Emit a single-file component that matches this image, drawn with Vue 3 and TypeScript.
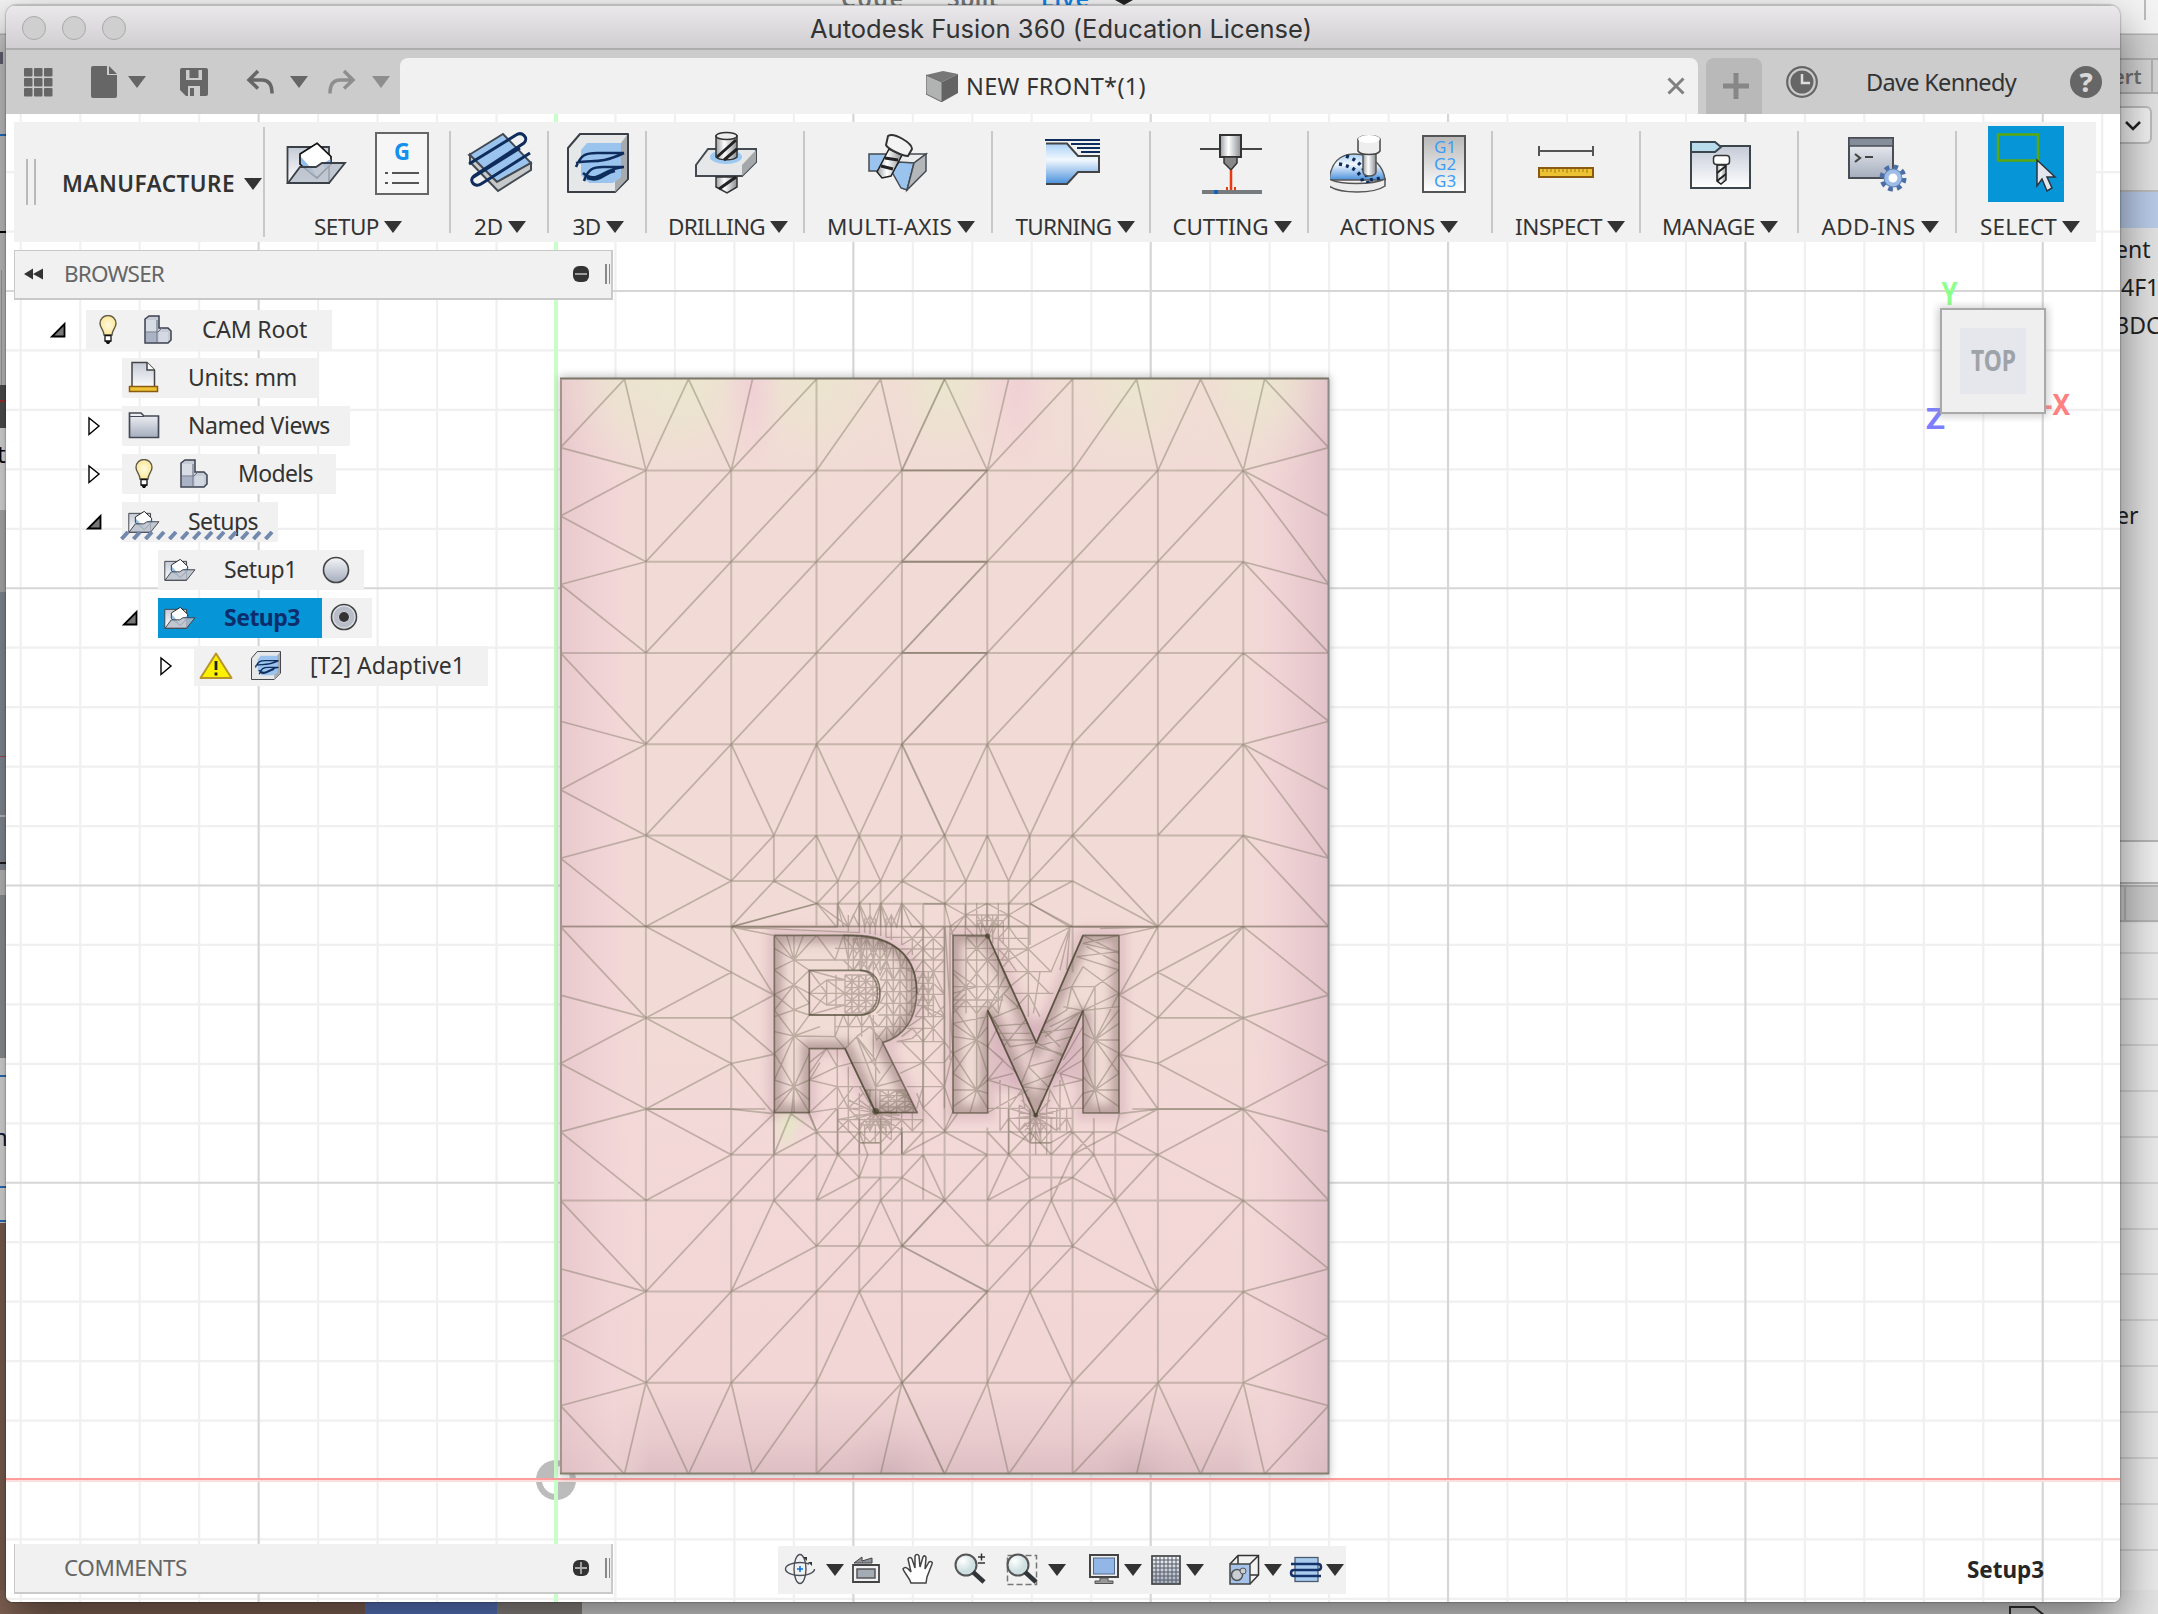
<script setup lang="ts">
type Pt = [number, number]
type Seg = [number, number, number, number]

interface Group { id: string; label: string; w: number; text: number; box: string; iw: number; shift: number }
interface Row { icon: string; text: string; x: number; slot: number; chip: number; tw: number; arrow: '' | 'open' | 'shut'; kind?: string }

/* Spreads the letters of a label so that it takes exactly the given width. */
const vFit = {
  mounted(el: HTMLElement, b: { value: number }) {
    const n = (el.textContent || '').trim().length
    const w = el.getBoundingClientRect().width
    el.style.letterSpacing = `${(b.value - w) / n}px`
  },
}

const groups: Group[] = [
  { id: 'setup', label: 'SETUP', w: 186, text: 65, box: '285 126 144 76', iw: 144, shift: 1 },
  { id: 'two', label: '2D', w: 98, text: 29, box: '465 126 68 76', iw: 68, shift: 1 },
  { id: 'three', label: '3D', w: 98, text: 28, box: '563 126 68 76', iw: 68, shift: 1 },
  { id: 'drill', label: 'DRILLING', w: 158, text: 97, box: '690 126 70 76', iw: 70, shift: 3 },
  { id: 'multi', label: 'MULTI-AXIS', w: 188, text: 125, box: '864 126 68 76', iw: 68, shift: 3 },
  { id: 'turn', label: 'TURNING', w: 158, text: 96, box: '1036 126 70 76', iw: 70, shift: 4 },
  { id: 'cut', label: 'CUTTING', w: 158, text: 96, box: '1194 126 70 76', iw: 70, shift: 3 },
  { id: 'act', label: 'ACTIONS', w: 184, text: 95, box: '1330 126 140 76', iw: 140, shift: -1 },
  { id: 'insp', label: 'INSPECT', w: 148, text: 87, box: '1532 126 68 76', iw: 68, shift: 4 },
  { id: 'man', label: 'MANAGE', w: 158, text: 93, box: '1684 126 70 76', iw: 70, shift: 1 },
  { id: 'add', label: 'ADD-INS', w: 158, text: 94, box: '1843 126 70 76', iw: 70, shift: 3 },
  { id: 'sel', label: 'SELECT', w: 140, text: 77, box: '1988 126 76 76', iw: 76, shift: 4 },
]

const rows: Row[] = [
  { icon: 'root', text: 'CAM Root', x: 86, slot: 116, chip: 246, tw: 105, arrow: 'open' },
  { icon: 'units', text: 'Units: mm', x: 122, slot: 66, chip: 196, tw: 109, arrow: '' },
  { icon: 'folder', text: 'Named Views', x: 122, slot: 66, chip: 228, tw: 142, arrow: 'shut' },
  { icon: 'root', text: 'Models', x: 122, slot: 116, chip: 214, tw: 75, arrow: 'shut' },
  { icon: 'setup', text: 'Setups', x: 122, slot: 66, chip: 156, tw: 70, arrow: 'open', kind: 'hatched' },
  { icon: 'setup', text: 'Setup1', x: 158, slot: 66, chip: 206, tw: 73, arrow: '', kind: 'radio' },
  { icon: 'setup', text: 'Setup3', x: 158, slot: 66, chip: 164, tw: 76, arrow: 'open', kind: 'active' },
  { icon: 'adaptive', text: '[T2] Adaptive1', x: 194, slot: 116, chip: 294, tw: 155, arrow: 'shut' },
]

/* Construction grid */
const vMinor: number[] = []
const vMajor: number[] = []
const hMinor: number[] = []
const hMajor: number[] = []
for (let i = -9; i <= 26; i++) (i % 5 === 0 ? vMajor : vMinor).push(556 + i * 59.47)
for (let i = -22; i <= 2; i++) (i % 5 === 0 ? hMajor : hMinor).push(1480 + i * 59.45)

/* Mesh in cell units: 9 columns by 12 rows */
const CX = 85.35
const CY = 91.24
const X = (u: number) => +(560.5 + u * CX).toFixed(1)
const Y = (v: number) => +(379.2 + v * CY).toFixed(1)
const chain = (s: string): Seg[] => {
  const out: Seg[] = []
  for (const line of s.trim().split(/\s*;\s*/)) {
    const p = line.trim().split(/\s+/).map((q) => q.split(',').map(Number) as Pt)
    for (let i = 1; i < p.length; i++) out.push([p[i - 1][0], p[i - 1][1], p[i][0], p[i][1]])
  }
  return out
}
const toPath = (segs: Seg[]) => segs.map((s) => `M${X(s[0])} ${Y(s[1])}L${X(s[2])} ${Y(s[3])}`).join('')

const edges = chain(`
0,.75 .75,0 1,1 1.5,0 2,1 2.25,0; 2,1 3,0; 3,1 3.75,0 4,1; 4.5,0 5,1 5.25,0; 5,1 6,0; 6,1 6.75,0 7,1 7.5,0 8,1 8.25,0 9,.75;
0,.75 1,1 0,1.5 1,2 0,2.25 1,3; 0,3 1,4 0,3.75; 1,4 0,4.5 1,5 0,5.25 1,6; 0,6 1,7 0,6.75; 1,7 0,7.5 1,8 0,8.25 1,9; 0,9 1,10 0,9.75; 1,10 0,10.5 1,11 0,11.25 .75,12;
9,.75 8,1 9,1.5; 8,1 9,2.25 8,2 9,3; 8,3 9,3.75 8,4 9,4.5; 8,4 9,5.25 8,5 9,6; 8,6 9,6.75 8,7 9,7.5 8,8 9,8.25; 8,8 9,9; 8,9 9,9.75 8,10 9,10.5 8,11 9,11.25 8.25,12;
.75,12 1,11 1.5,12 2,11 2.25,12 3,11; 3,12 4,11 3.75,12; 4.5,12 5,11 5.25,12 6,11; 6,12 7,11 6.75,12; 7,11 7.5,12 8,11 8.25,12;
1,5 2,4 2.5,5 3,4 3.5,5 4,4; 4.5,5 5,4 5.5,5 6,4; 6,5 7,4; 7,5 8,4;
1,5 2,5.5 1,6; 2,5.5 2.5,5; 3,5 2.5,5.5 2,6; 2.5,5.5 3,5.75 2,6; 3,5 3.25,5.5 3.5,5 3.75,5.5 4,5; 3,5.75 3.25,5.5; 3.25,5.75 3.5,5.5; 3.5,5.75 3.75,5.5; 3.75,5.75 4,5.5 4.5,5 4.75,5.5 5,5 5.25,5.5 5.5,5; 5.5,5.5 6,5; 4,5.5 4.5,5.75 4.75,5.5; 4.5,5.75 4.25,5.75; 5.25,5.75 5.5,5.5; 5.5,5.75 6,5.5 7,6 6,5; 7,6 8,5; 7,7 8,6; 5.5,5.75 6,6;
2,6 2.5,6.75 2,6.5 1,6; 1,7 2,6.5; 2,7 2.5,6.75; 2,7 2.5,7.4 2,7.5 2.5,8.05 2,8; 1,7 2,7.5; 1,8 2,7.5; 1,8 2,8.5 1,9; 1,7 2,7; 1,8 2,8;
8,6 7,6.5 8,7 7,7; 8,7 7,7.5 8,8; 7,7 8,7; 7,6.5 6.55,6.75 7,7 6.55,7.4 7,7.5; 6.55,7.4 7,8 6.55,8.05; 6.55,6.75 7,6; 7,8 8,8;
2,8.5 2.5,8.05 2.5,8.5 2.7,8.05 3,8.25 2.5,8.5; 3,8.25 2.9,8.03; 3,8.5 2.5,9; 3,9 3.25,8.5 3.5,8.75 3,9; 3.5,8.75 3.6,8.5; 3.75,8.75 3.5,9; 4,8.75 3.75,9; 4,8.75 4.5,9 4.25,8.5 4,8.75; 4.5,9 5,8.5; 5,9 5.25,8.5 5.5,8.75 5,9; 6,8.75 5.5,9; 6,8.75 6.5,9 6.25,8.5 6,8.75; 5.75,9 6,8.5; 6.5,9 7,8.5 6.5,8.25 6.55,8.05; 8,8 7,8.5 8,9; 6.5,8.25 7,8;
3,8.25 3.25,8.5 3.5,8.25 3.6,8.5; 3.75,8.5 4,8.25 4,8.5 4.25,8.25; 4.5,8.25 5,8.5; 4.5,8.25 4,8.5; 5,8.25 5.25,8.5 5.5,8.25 5.75,8.5 6,8.25 6.25,8.5; 6.25,8.25 6,8.5; 6.5,8.25 6,8.5; 4.5,8.25 4.65,8.05;
1,10 2,9; 2,9 2.5,8.5; 2.5,9 2,10 3,9.5 2.5,9; 3,9.5 3.5,9; 3.5,9.5 3.75,9 4,9.5; 4.5,9 5,9.5 5.5,9; 5.5,9.5 5.75,9 6,9.5 6.5,9 7,10 6,9.5; 7,10 8,9; 3,10 3.5,9.5; 3.5,10 4,9.5; 5,10 5.5,9.5; 5.5,10 6,9.5;
1,11 2,10; 2,11 3,10; 3,11 3.5,10 4,11; 5,11 5.5,10 6,11; 6,11 7,10; 7,11 8,10`)
for (const v of [1, 2, 3]) for (let k = 1; k <= 7; k++) if (k !== 4) edges.push([k, v + 1, k + 1, v])

const grid = chain(`
1,1 1,11; 2,1 2,11; 3,0 3,6; 3,8.25 3,12; 4,1 4,6; 4,8.2 4,11; 5,1 5,6; 5,8.2 5,11; 6,0 6,6.5; 6,8 6,12; 7,1 7,11; 8,1 8,11;
2.5,5 2.5,5.5; 3.25,5.5 3.25,6; 3.5,5 3.5,6; 3.75,5.5 3.75,6; 4.5,5 4.5,9; 4.75,5.5 4.75,6; 5.25,5.5 5.25,6; 5.5,5 5.5,6.2; 4.25,5.75 4.25,9;
2.5,8 2.5,9; 3.25,8 3.25,8.5; 3.5,8.1 3.5,10; 3.75,8.1 3.75,9; 5.25,8 5.25,8.5; 5.5,8 5.5,10; 5.75,8.1 5.75,9; 6.25,8.1 6.25,8.5; 6.5,8.25 6.5,9;
1,1 8,1; 1,2 8,2; 0,3 9,3; 1,4 8,4; 1,5 8,5; 2,5.5 6,5.5; 3,5.75 5.5,5.75; 0,6 9,6; 3,8.25 4,8.25; 4,8.25 6.5,8.25; 3.5,8.37 3.75,8.37; 5.5,8.37 5.75,8.37; 2,8.5 7,8.5; 3.5,8.75 4,8.75; 5.5,8.75 6,8.75; 0,9 9,9; 3,9.5 6,9.5; 1,10 8,10; 1,11 8,11; 1,8 2.4,8; 6.7,8 8,8`)

const spine = chain(`4.5,0 4,1 5,1 4,2 5,2 4,3 5,3 4,4 4.5,5; 4.5,9 4,9.5 5,10 4,11 4.5,12`)

/* Fine mesh round the engraved letters, in thirds of a pixel from (720, 860) */
const lattice = (x0: number, y0: number, x1: number, y1: number, dx: number, dy: number) => {
  let d = ''
  for (let x = x0; x <= x1 + 0.1; x += dx) d += `M${x} ${y0}V${y1}`
  for (let y = y0; y <= y1 + 0.1; y += dy) d += `M${x0} ${y}H${x1}`
  let j = 0
  for (let y = y0; y < y1 - 1; y += dy, j++) {
    let i = 0
    for (let x = x0; x < x1 - 1; x += dx, i++) {
      d += (i + (i >> 1) + j * 2) % 3 === 0 ? `M${x} ${y}l${dx} ${dy}` : `M${x + dx} ${y}l${-dx} ${dy}`
    }
  }
  return d
}
const fan = (cx: number, cy: number, pts: string) => pts.trim().split(/\s+/).map((p) => `M${cx} ${cy}L${p.replace(',', ' ')}`).join('')

const outside =
  'M352 130L385 200L418 130L434 200L450 165L466 200L482 130L498 200L514 165L530 200L545 130L575 200L609 200L545 130M352 130L370 200M385 200L400 165L418 200M418 130L450 200M482 130L450 200M482 130L514 200M545 130L514 200' +
  'M352 130V200M385 165V215M418 130V218M450 130V222M482 130V228M514 165V240M545 130V255M434 175V218M466 175V225M498 175V232' +
  'M498 232H673M530 267H673M560 300H673M580 335H673M592 370H640M592 403H673M590 437H640M585 470H673M560 505H640M530 545H673' +
  'M609 200V545M640 235V545M577 235V285M673 200V545M545 200L577 235L609 200L640 235L673 200M545 255L577 235L609 267L640 235L673 267M560 285L609 235M577 300L609 267L640 300L673 267M585 335L609 300L640 335L673 300M592 370L609 335L625 370L640 335L673 403L640 370M592 403L609 370L625 403L640 370M592 437L609 403L625 437L640 403L673 470L609 437M585 470L609 437L640 470L673 437M565 500L609 470L640 505L673 470M545 530L577 505L609 545L640 505L673 545M530 545L577 535L609 505' +
  'M625 335V470M592 352H640M592 387H640M592 420H640' +
  'M736 130V225M770 130V225M801 130V226M835 130V300M866 130V300M736 165H866M770 182H850M785 200H850M736 165L801 130L866 165L925 130M690 226L736 165L770 200L801 165L835 200L866 165L925 200M736 165L690 200M770 165L801 215L835 165M785 182L801 226L818 182M770 182L785 226M835 182L815 230M835 165L810 220M736 200L760 226M673 130L699 226M673 130L736 165' +
  'M815 235H925M825 267H925M835 300H870M850 335H925M850 182V250M818 165V250M785 165V215M835 235L866 200L890 235L925 267L866 267L835 235M835 267L866 300L925 267M845 300L866 267M850 320L866 300L890 335' +
  'M385 745V812M418 700V883M450 690V812M482 758V883M514 758V840M545 758V883M352 779H545M400 765H540M418 795H514M436 785H500M352 745H430M352 812L385 779L418 812L434 779L450 812L467 779L482 812L498 779L514 812L545 779L577 812L609 779M352 779L385 812M385 745L418 779M577 758V812M545 779H609M418 812L450 847L482 812L514 840M385 812L418 848H482L514 812M434 795V848M466 795V848M498 779V830' +
  fan(467, 758, '385,720 385,745 400,779 418,795 434,812 450,812 482,812 498,812 514,795 545,779 545,812 418,720 418,680 440,690 352,779') +
  'M866 735V883M898 735V812M930 760V848M947 768V883M962 770V848M980 745V883M1010 745V812M1040 745V812M866 745H915M985 745H1050M866 775H1055M900 760H1000M915 790H980M840 812L866 775L898 812L915 790L930 812L947 790L962 812L980 790L1010 812L1040 775L1055 812M866 812L930 848H993L1055 812M898 812L930 848L947 812L962 848L993 812' +
  fan(947, 768, '866,745 880,775 898,812 915,812 930,835 962,835 980,812 1010,812 1020,775 1040,745 925,710 905,720 965,720 990,720 898,735') +
  'M35 201L290 130M35 201L160 226M35 201L350 201L290 130M35 201L420 218M290 130L385 200' +
  'M1312 201L1199 226M1312 201L1050 201L930 130M1312 201L1140 206M1050 201L993 335L925 267M1050 201L925 267L925 335M1050 201L1020 330M1050 201L1040 330' +
  'M925 200V470M925 335H993M870 380L925 335L990 402M865 267L925 335M880 400H1000M925 402L960 470M925 402L890 440M960 335L940 460' +
  'M545 545L609 608L673 545M609 545V745M520 608H673M540 640L609 608M560 680H673M609 608L673 680L609 745L590 700M673 545V745M609 680L590 745M673 608L699 570M673 680L699 580M673 545L699 580L675 200M673 680L699 755L673 812L609 745M690 200L690 600' +
  'M268 608L320 566L352 620L400 608M352 566V883M268 660L352 620L352 680L268 660M268 758L352 680L385 745L430 700M290 812L268 758L352 745L400 680M290 812L352 745M320 566L268 640M352 680H430M385 620V745'

const inside =
  'M345 300L370 226L385 300L410 230L425 300L440 230L460 300L480 235L500 300L520 250L545 320L560 280M330 300H560M345 265H540M385 226V330M425 226V331M460 230V345M500 240V360M540 260V540M370 300L400 331L425 300L445 335L460 300L480 345L500 300L520 360L545 320L585 340M480 325H590M482 360H592M482 395H592M482 430H588M475 465H580M450 500H560M345 500H450' +
  'M480 360L500 325L520 360L540 325L560 360L590 360M480 395L500 360L520 395L540 360L565 395L590 380M480 430L500 395L520 430L540 395L565 430L590 400M470 460L500 430L520 465L540 430L565 465L585 430M445 465L475 500L500 465L520 500L540 465L560 500M345 530L370 465L385 500L410 465L425 500L450 465L470 540L500 500L520 530L540 500M520 260V530M500 300V540M560 280V500M385 465V560M425 465V530M460 465V600M575 320V460M410 530L450 500L490 548M345 465V530' +
  lattice(400, 235, 500, 330, 20, 32) +
  fan(222, 300, '163,226 200,226 250,226 163,265 163,330 268,331 345,300 290,226') +
  fan(222, 375, '163,330 163,403 163,450 268,331 268,400 268,430') +
  fan(222, 450, '163,403 163,470 268,430 268,465') +
  fan(222, 528, '163,450 163,515 163,580 268,465 345,530 268,566 300,500 163,660') +
  fan(222, 680, '163,580 163,660 163,720 163,758 215,758 268,758 268,720 268,660 268,580') +
  'M222 226V758M163 403L222 450M200 226L222 300L250 226L290 226L345 300L370 226L410 280' +
  'M345 530L375 566L410 530L440 610L467 600L490 548M410 530L467 600L467 758M440 610L467 680L520 608M430 690L545 690M467 680L545 660M467 758L545 690L592 758M400 608H520M410 530L480 640' +
  lattice(480, 690, 580, 758, 25, 17) +
  lattice(738, 230, 835, 300, 32, 35) + 'M699 300H835M770 300V400M803 300V452M738 300L770 340L803 300L835 340L803 380L770 340L738 380L699 340M699 380H870M738 300V460M699 420L738 380L770 420L803 380L835 420L870 380M699 460L738 420L770 460L803 420L835 460L850 400M699 420H850M835 300V450M699 440H800' +
  fan(770, 540, '699,440 699,490 699,530 699,580 699,640 803,452 803,500 803,560 803,640') +
  fan(770, 690, '699,580 699,640 699,690 699,740 803,640 803,700 803,745 750,758 803,660') +
  'M770 230V690M699 440L738 400M699 330L770 380L699 400M699 490L803 470' +
  fan(1125, 540, '1089,452 1089,520 1089,600 1197,400 1197,450 1197,490 1197,540 1197,580 1197,640') +
  fan(1125, 690, '1089,600 1089,650 1089,700 1089,745 1197,580 1197,640 1197,690 1197,740 1140,758') +
  fan(1089, 452, '1125,380 1197,440 1055,380 1197,400 1030,440 990,500 975,530') +
  'M1125 380V690M1197 330L1125 380L1055 380L1089 320L1197 400M1197 330L1070 290L1197 275L1089 250L1197 226M1089 226L1197 280M1100 260L1197 310' +
  'M1000 400L1055 380L1040 450L975 490M1089 500L949 520M1089 520L949 560L1089 600M949 548L1030 590L1089 620M949 548L925 620L985 680M949 548L870 560L803 452M803 500L925 490M803 520L930 520M803 540L940 540M850 560L925 470L850 400M880 600L949 560M803 452L870 380L835 300M803 480L900 440M1000 600L925 620L900 680L1010 640M1020 560L960 500M870 320L803 452M905 680L985 690'

const bowl = lattice(375, 345, 480, 460, 21, 19) + 'M395 355V450M416 345V455M437 345V455M320 360V435M320 360H375M320 435H375M348 345V450M268 331L375 360M268 400H480M268 331L320 400L268 465M268 465L375 435M268 400L320 360M268 400L320 435M320 360L375 400L320 435M375 400L320 400'
const moat = 'M268 660L300 608M803 452L835 500L803 560L850 600L803 660L880 640M803 660L905 690M803 560L890 640M803 758L870 720L925 690M1089 600L1020 640L1089 660L1000 680M1089 500L1030 600M1089 560L1010 640M803 745L866 745L905 690L915 745M1089 745L1020 745L990 690L980 745M1020 640L1055 745L1089 700M840 660L840 812M866 680V812M1020 660V812'

const rPath = 'M163 226H400C530 226 592 300 590 400C588 480 550 530 488 548L592 758H467L375 566H268V758H163Z'
const rHole = 'M268 331H420C470 331 480 370 480 400C480 440 460 465 420 465H268Z'
const mPath = 'M699 226H803L949 548L1089 226H1197V759H1089V452L947 768L803 452V759H699Z'

const paths = { edges: toPath(edges), grid: toPath(grid), spine: toPath(spine) }
const yellow: [number, number, number][] = [[0.9, 85, 0.9], [1.5, 75, 0.9], [3, 85, 0.8], [4.5, 62, 0.9], [6.75, 78, 0.85], [8.2, 75, 0.95]]
const sideRows = [953, 999, 1045, 1091, 1137, 1183, 1229, 1274, 1320, 1366, 1412, 1458, 1504, 1550, 1596]
const nine = [0, 1, 2, 3, 4, 5, 6, 7, 8]
</script>

<template>
  <div class="desktop">
    <svg class="back" width="2158" height="1614" viewBox="0 0 2158 1614">
      <rect width="2158" height="1614" fill="#e2e2e2" />
      <rect width="2158" height="34" fill="#f4f4f4" />
      <g class="bt" font-size="23">
        <text x="841" y="7" textLength="62" fill="#777">Code</text>
        <text x="947" y="7" textLength="51" fill="#777">Split</text>
        <text x="1041" y="7" textLength="48" fill="#0d84e8">Live</text>
      </g>
      <path d="M1115 0h18l-9 5z" fill="#222" />
      <path d="M2145 0v20" stroke="#bbb" stroke-width="2" />
      <path d="M0 34.500H2158" stroke="#b5b5b5" stroke-width="2" />
      <rect x="0" y="35" width="2158" height="58" fill="#d3d3d3" />
      <path d="M2100 59H2158M2100 93H2158M2152 59V93" stroke="#b0b0b0" stroke-width="2" fill="none" />
      <text class="bt" x="2113" y="84" font-size="20" fill="#707070">ert</text>
      <rect x="2080" y="107" width="71" height="36" rx="5" fill="#f0f0f0" stroke="#bbb" stroke-width="2" />
      <path d="M2126 122l7 7 7-7" stroke="#222" stroke-width="2.500" fill="none" />
      <path d="M2100 191H2158" stroke="#bbb" stroke-width="2" />
      <rect x="2100" y="192" width="58" height="36" fill="#b9cbe8" />
      <g class="rt" font-size="23" fill="#222">
        <text x="2115" y="258">ent</text><text x="2121" y="296">4F1</text><text x="2116" y="334">3DC</text><text x="2116" y="524">er</text>
      </g>
      <rect x="2100" y="841" width="58" height="42" fill="#efefef" />
      <rect x="2100" y="886" width="58" height="35" fill="#cfcfcf" />
      <path d="M2100 841H2158M2100 883H2158M2100 886H2158M2125 887V921M2100 921H2158" stroke="#b4b4b4" stroke-width="2" fill="none" />
      <rect x="2100" y="923" width="58" height="691" fill="#eaeaea" />
      <path v-for="y in sideRows" :key="y" :d="`M2100 ${y}H2158`" stroke="#d2d2d2" stroke-width="2" />
      <rect x="582" y="1590" width="1576" height="24" fill="#e4e4e4" />
      <path d="M2010 1620V1607H2034L2050 1620" fill="none" stroke="#333" stroke-width="2" />
      <g>
        <rect x="0" y="35" width="10" height="350" fill="#cfcfcf" />
        <rect x="0" y="134" width="10" height="2" fill="#2271cf" />
        <rect x="0" y="231" width="10" height="2" fill="#000" />
        <rect x="0" y="52" width="3" height="12" fill="#667" />
        <rect x="1" y="270" width="1" height="150" fill="#5cc" />
        <rect x="0" y="385" width="10" height="43" fill="#555" />
        <rect x="0" y="400" width="10" height="2" fill="#a33" />
        <rect x="0" y="428" width="10" height="82" fill="#f0f0f0" />
        <text class="rt" x="-3" y="463" font-size="24">t</text>
        <rect x="0" y="510" width="10" height="82" fill="#bbb" />
        <rect x="0" y="592" width="10" height="278" fill="#9097a0" />
        <rect x="0" y="756" width="10" height="1" fill="#a55" />
        <rect x="0" y="815" width="10" height="2" fill="#ccc" />
        <rect x="0" y="862" width="10" height="2" fill="#222" />
        <rect x="0" y="870" width="10" height="25" fill="#ccc" />
        <rect x="0" y="895" width="10" height="163" fill="#9a9da0" />
        <rect x="0" y="1058" width="10" height="164" fill="#eee" />
        <text class="rt" x="-7" y="1146" font-size="24" fill="#124">n</text>
        <path d="M0 1076H10M0 1187H10M0 1221H10" stroke="#2b78c8" stroke-width="2" />
        <rect x="0" y="1223" width="10" height="391" fill="#856556" />
      </g>
      <rect x="0" y="1590" width="365" height="24" fill="#8a6a5a" />
      <rect x="365" y="1590" width="132" height="24" fill="#5f7fcf" />
      <rect x="497" y="1590" width="85" height="24" fill="#96908c" />
    </svg>

    <svg class="defs" width="0" height="0">
      <defs>
        <linearGradient id="steel" x1="0" y1="0" x2="1" y2="0"><stop offset="0" stop-color="#9a9ea2" /><stop offset=".4" stop-color="#fff" /><stop offset="1" stop-color="#8a8e92" /></linearGradient>
        <linearGradient id="grey" x1="0" y1="0" x2="0" y2="1"><stop offset="0" stop-color="#f4f5f8" /><stop offset="1" stop-color="#a5adbd" /></linearGradient>
        <linearGradient id="greyUp" x1="0" y1="0" x2="0" y2="1"><stop offset="0" stop-color="#c4cad6" /><stop offset="1" stop-color="#fff" /></linearGradient>
        <linearGradient id="blue" x1="0" y1="0" x2="0" y2="1"><stop offset="0" stop-color="#a9d0f7" /><stop offset=".4" stop-color="#f2f8fe" /><stop offset="1" stop-color="#4a90dc" /></linearGradient>
        <linearGradient id="gcode" x1="0" y1="0" x2="0" y2="1"><stop offset="0" stop-color="#b8b8b8" /><stop offset="1" stop-color="#fff" /></linearGradient>
        <radialGradient id="bulbG"><stop offset="0" stop-color="#fffbe0" /><stop offset="1" stop-color="#fbe79a" /></radialGradient>
        <radialGradient id="lens" cx=".35" cy=".3"><stop offset="0" stop-color="#fff" /><stop offset="1" stop-color="#cfe0e2" /></radialGradient>
        <symbol id="i-setup" viewBox="0 0 61 43">
          <path d="M1.500 5H43V41H1.500z" fill="url(#greyUp)" stroke="#3b3f46" stroke-width="1.800" />
          <path d="M31 1.200L45 14.500V22L31 36 14 22V12z" fill="#fff" stroke="#111" stroke-width="1.700" />
          <path d="M15 15L26 27 31 35 24 30 15 22zM44.500 17V22L40 26 36 22z" fill="#8fbdec" />
          <path d="M2 41L14 25H30L36 21H59L43 41z" fill="#b4bdc9" fill-opacity=".82" stroke="#3b3f46" stroke-width="1.800" />
        </symbol>
        <symbol id="i-cubes" viewBox="0 0 28 29">
          <path d="M1 4L5 1H15V13H24L27 16V25L24 28H1z" fill="#c6cbd6" stroke="#3b4250" stroke-width="1.500" />
          <path d="M2 5h10v12H2z" fill="#d8dce5" /><path d="M2 18h11v9H2z" fill="#aab3c6" /><path d="M15 17h9v10h-9z" fill="#d3d8e2" /><path d="M13 5V27M2 17h12l4-4" stroke="#6a7384" fill="none" />
        </symbol>
        <symbol id="i-bulb" viewBox="0 0 18 30">
          <path d="M5 20C5 15 1 13 1 8.500A8 8 0 0 1 17 8.500C17 13 13 15 13 20z" fill="url(#bulbG)" stroke="#5f5a48" stroke-width="1.400" />
          <path d="M6 20.500h6v5.500H6z" fill="#fff" stroke="#111" stroke-width="1.300" /><path d="M6 26h6l-2 3H8z" fill="#111" />
        </symbol>
        <symbol id="i-adapt" viewBox="0 0 62 60">
          <path d="M1 15L13 1H61V46L48 59H1z" fill="#e6e7e9" stroke="#3b4048" stroke-width="2" stroke-linejoin="round" />
          <path d="M48 59V48L54 44V10L60 2V46z" fill="#a8abae" /><path d="M14 17L20 10H54V44L46 50H22L14 42z" fill="#9ac4ee" />
          <path d="M9 34C14 22 18 20 30 20H57M9 30C24 26 32 32 57 20M17 48C21 36 26 34 36 34H57M16 40C30 52 34 36 57 34M20 45C34 50 36 40 48 38" fill="none" stroke="#0f2d5c" stroke-width="2.600" />
        </symbol>
      </defs>
    </svg>

    <section class="window">
      <header class="titlebar">
        <i class="light" /><i class="light" /><i class="light" />
        <h1><span v-fit="502">Autodesk Fusion 360 (Education License)</span></h1>
      </header>

      <div class="tabbar">
        <svg class="quick" width="394" height="64" viewBox="6 50 394 64" fill="#666">
          <rect v-for="n in nine" :key="n" :x="24 + (n % 3) * 10" :y="68 + Math.floor(n / 3) * 10" width="8.500" height="8.500" rx="1" />
          <path d="M93 66h14v9h10v21a2 2 0 0 1-2 2H93a2 2 0 0 1-2-2V68a2 2 0 0 1 2-2z M109 66l8 8h-8z" />
          <path d="M128 76h18l-9 12zM290 76h18l-9 12z" />
          <path fill-rule="evenodd" d="M182 68h24a2 2 0 0 1 2 2v24a2 2 0 0 1-2 2H186l-6-6V70a2 2 0 0 1 2-2zM186 70v10h16V70zM188 96h12V86H188z" />
          <rect x="189.500" y="68" width="9" height="10" /><rect x="190" y="88" width="4" height="8" />
          <path d="M258 71L249 80l9 8.500M250 80H262C269 80 272 85 272 93.500" fill="none" stroke="#666" stroke-width="3.500" />
          <path d="M344 71L353 80l-9 8.500M352 80H340C333 80 330 85 330 93.500" fill="none" stroke="#8e8e8e" stroke-width="3.500" />
          <path d="M372 76h18l-9 12z" fill="#8e8e8e" />
        </svg>
        <div class="tab">
          <div class="tabname">
            <svg width="32" height="31" viewBox="0 0 32 31"><path d="M0 4L17 0 32 3 16 11z" fill="#777" /><path d="M0 4L16 11V31L0 23z" fill="#b0b3b2" stroke="#666" /><path d="M16 11L32 3V22L16 31z" fill="#636363" /></svg>
            <span v-fit="180">NEW FRONT*(1)</span>
          </div>
          <svg class="close" width="18" height="18" viewBox="0 0 18 18"><path d="M1.500 1.500l15 15M16.500 1.500l-15 15" stroke="#808080" stroke-width="3" /></svg>
        </div>
        <div class="plus"><svg width="26" height="26" viewBox="0 0 26 26"><path d="M13 0V26M0 13H26" stroke="#878787" stroke-width="5" /></svg></div>
        <svg class="clock" width="32" height="32" viewBox="0 0 32 32"><circle cx="16" cy="16" r="14.800" fill="none" stroke="#666" stroke-width="2.200" /><circle cx="16" cy="16" r="11.500" fill="#666" /><path d="M16 8v9h8" fill="none" stroke="#ddd" stroke-width="2.500" /></svg>
        <span v-fit="150" class="user">Dave Kennedy</span>
        <span class="help">?</span>
      </div>

      <main class="viewport">
        <svg class="canvas" width="2114" height="1488" viewBox="6 114 2114 1488">
          <defs>
            <linearGradient id="base" x1="0" y1="0" x2="0" y2="1"><stop offset="0" stop-color="#f1ddd4" /><stop offset=".1" stop-color="#f2dad6" /><stop offset=".6" stop-color="#f2dad6" /><stop offset=".72" stop-color="#f3d8d8" /><stop offset=".92" stop-color="#f1d6d5" /><stop offset=".97" stop-color="#e8cacd" /><stop offset="1" stop-color="#ddbfc4" /></linearGradient>
            <linearGradient id="sideL" x1="0" y1="0" x2="1" y2="0"><stop offset="0" stop-color="#e8c9cd" /><stop offset=".6" stop-color="#f2d5d7" stop-opacity=".8" /><stop offset="1" stop-color="#f1dad5" stop-opacity="0" /></linearGradient>
            <linearGradient id="sideR" x1="1" y1="0" x2="0" y2="0"><stop offset="0" stop-color="#e1c2c9" /><stop offset=".6" stop-color="#f1d3d6" stop-opacity=".8" /><stop offset="1" stop-color="#f1dad5" stop-opacity="0" /></linearGradient>
            <radialGradient id="yel"><stop offset="0" stop-color="#eae7cd" /><stop offset=".4" stop-color="#ebe5cf" stop-opacity=".7" /><stop offset="1" stop-color="#f0dcd4" stop-opacity="0" /></radialGradient>
            <radialGradient id="pink"><stop offset="0" stop-color="#f0ced5" stop-opacity=".9" /><stop offset="1" stop-color="#f1d5d6" stop-opacity="0" /></radialGradient>
            <radialGradient id="mauve"><stop offset="0" stop-color="#c8a9b0" stop-opacity=".7" /><stop offset="1" stop-color="#e0c0c6" stop-opacity="0" /></radialGradient>
            <clipPath id="face"><rect x="560" y="379" width="769" height="1095" /></clipPath>
            <clipPath id="glyphs"><path :d="rPath + rHole + mPath" clip-rule="evenodd" /></clipPath>
            <clipPath id="hole"><path :d="rHole" /></clipPath>
            <filter id="soft" x="-20%" y="-20%" width="140%" height="140%"><feGaussianBlur stdDeviation="14" /></filter>
            <filter id="cast" x="-5%" y="-5%" width="110%" height="110%"><feGaussianBlur stdDeviation="4" /></filter>
          </defs>
          <rect x="6" y="114" width="2114" height="1488" fill="#fff" />
          <path :d="vMinor.map((x) => `M${x} 114V1602`).join('') + hMinor.map((y) => `M6 ${y}H2120`).join('')" stroke="#f0f0f0" stroke-width="2.200" />
          <path :d="vMajor.map((x) => `M${x} 114V1602`).join('') + hMajor.map((y) => `M6 ${y}H2120`).join('')" stroke="#d6d6d6" stroke-width="2.200" />

          <circle cx="556" cy="1480" r="20" fill="#bcbcbc" />
          <path d="M556 1480V1466A14 14 0 0 1 570 1480zM556 1480V1494A14 14 0 0 1 542 1480z" fill="#fff" />
          <path d="M6 1481H2120" stroke="#fddede" stroke-width="2" />
          <path d="M556 114V1602" stroke="#c8ffc8" stroke-width="4" />
          <path d="M6 1479H2120" stroke="#ff9c9c" stroke-width="2" />

          <rect x="560" y="376" width="770" height="1101" fill="#777" opacity=".45" filter="url(#cast)" />
          <rect x="560" y="379" width="769" height="1095" fill="url(#base)" />
          <g clip-path="url(#face)">
            <rect x="560" y="379" width="90" height="1095" fill="url(#sideL)" />
            <rect x="1235" y="379" width="94" height="1095" fill="url(#sideR)" />
            <ellipse v-for="t in yellow" :key="t[0]" :cx="X(t[0])" cy="379" :rx="t[1]" ry="110" :opacity="t[2]" fill="url(#yel)" />
            <ellipse :cx="X(2.25)" cy="390" rx="30" ry="95" fill="url(#pink)" /><ellipse :cx="X(5.35)" cy="390" rx="42" ry="100" fill="url(#pink)" />
            <ellipse :cx="X(3.85)" cy="1480" rx="60" ry="65" fill="url(#mauve)" /><ellipse :cx="X(6.75)" cy="1480" rx="55" ry="65" fill="url(#mauve)" /><ellipse cx="565" cy="1474" rx="95" ry="75" fill="url(#mauve)" opacity=".4" /><ellipse cx="1325" cy="1474" rx="80" ry="75" fill="url(#mauve)" opacity=".4" />
          </g>

          <g transform="translate(720 860) scale(.33333)">
            <g filter="url(#soft)">
              <path :d="rPath + mPath" fill="none" stroke="#c9a3ae" stroke-opacity=".42" stroke-width="44" />
              <path d="M820 460L920 480H980L1080 470V660H1020L985 690 949 600 905 690H820z" fill="#cfa9b6" fill-opacity=".55" />
              <path d="M175 765h70l-50 110z" fill="#e6e6c8" />
            </g>
            <g clip-path="url(#glyphs)">
              <path :d="rPath + rHole + mPath" fill="#eddcd3" fill-opacity=".5" fill-rule="evenodd" />
              <path :d="rPath + mPath" fill="none" stroke="#8d7370" stroke-opacity=".5" stroke-width="44" filter="url(#soft)" />
              <path :d="inside" class="fine" />
            </g>
            <g clip-path="url(#hole)"><path :d="bowl" class="fine" /></g>
            <path :d="outside + moat" class="fine" />
          </g>
          <path :d="paths.grid" fill="none" stroke="#5f5a43" stroke-opacity=".28" stroke-width="2" />
          <path :d="paths.edges" fill="none" stroke="#5f5a43" stroke-opacity=".34" stroke-width="1.700" />
          <path :d="paths.spine" fill="none" stroke="#4f4a35" stroke-opacity=".42" stroke-width="1.900" />
          <path :d="`M560 ${Y(6)}H1329`" stroke="#4f4a35" stroke-opacity=".3" stroke-width="1.500" />
          <g transform="translate(720 860) scale(.33333)" fill="none" stroke="#45412c" stroke-linejoin="round">
            <path :d="rPath + rHole + mPath" stroke-width="5" stroke-opacity=".62" />
            <path d="M467 758L375 566M803 226L949 548L1089 226M803 452L947 768L1089 452M370 226C530 226 592 290 590 400M420 331C490 331 490 465 420 465H268M467 758H530" stroke-width="5" stroke-opacity=".5" />
            <g fill="#45412c" fill-opacity=".7" stroke="none"><circle cx="467" cy="754" r="10" /><circle cx="803" cy="228" r="8" /><circle cx="947" cy="766" r="7" /></g>
          </g>
          <path d="M560 378.500H1329" stroke="#7b7768" stroke-width="2" /><path d="M561 379V1474" stroke="#a3948c" stroke-width="2" /><path d="M1328.500 379V1474" stroke="#8f8a8a" stroke-width="2" /><path d="M560 1473.500H1329" stroke="#86806f" stroke-width="2" />

          <g class="cube">
            <text x="1941.500" y="305" font-size="33" textLength="16" lengthAdjust="spacingAndGlyphs" fill="#8dff8d">Y</text>
            <text x="1926" y="429" font-size="28" textLength="19" lengthAdjust="spacingAndGlyphs" fill="#7d7dff">Z</text>
            <text x="2044" y="415" font-size="28" textLength="26" lengthAdjust="spacingAndGlyphs" fill="#ff8080">-X</text>
            <rect x="1938" y="307" width="110" height="109" fill="#999" opacity=".5" filter="url(#cast)" />
            <rect x="1941" y="309" width="104" height="104" fill="#efefef" stroke="#a9a9a9" stroke-width="2" />
            <rect x="1960" y="328" width="66" height="66" fill="#e5e7ec" />
            <text x="1971" y="371" font-size="29" textLength="45" lengthAdjust="spacingAndGlyphs" fill="#9ea2a9" font-weight="700">TOP</text>
          </g>
        </svg>

        <div class="ribbon">
          <div class="workspace"><i class="grip" /><b v-fit="173">MANUFACTURE</b><i class="tri" /></div>
          <template v-for="(g, n) in groups" :key="g.id">
            <i class="sep" :class="{ tall: n === 0 }" />
            <div class="group" :style="{ width: g.w - 2 + 'px' }">
              <svg :width="g.iw" height="76" :viewBox="g.box">
                <template v-if="g.id === 'setup'">
                  <use href="#i-setup" x="286" y="142" width="61" height="43" />
                  <rect x="376" y="133" width="52" height="61" fill="#f6f6f6" stroke="#666" stroke-width="2" />
                  <text class="rt" x="394" y="160" font-size="24" font-weight="700" fill="#1290ee" textLength="16" lengthAdjust="spacingAndGlyphs">G</text>
                  <path d="M385 173h3m4 0h27M385 183h3m4 0h27" stroke="#555" stroke-width="2" />
                </template>
                <template v-else-if="g.id === 'two'">
                  <path d="M469 155L503 134 531 163 497 182z" fill="#9ac4ee" stroke="#444a52" stroke-width="2" /><path d="M497 182L531 163V170L498 191 470 162V155z" fill="#c6c8ca" stroke="#444a52" stroke-width="2" />
                  <path d="M469 164L516 135C522 131 529 138 524 143L474 176C468 181 475 188 481 184L530 153M472 178L520 148" fill="none" stroke="#0f2d5c" stroke-width="3" />
                </template>
                <use v-else-if="g.id === 'three'" href="#i-adapt" x="567" y="133" width="62" height="60" />
                <template v-else-if="g.id === 'drill'">
                  <path d="M696 165L708 149H756V162L742 176H696z" fill="#e6e7e9" stroke="#444a52" stroke-width="2" /><path d="M742 176V165L756 150V162z" fill="#a5a8ab" />
                  <ellipse cx="726" cy="157" rx="16" ry="7" fill="#9cc8f2" />
                  <path d="M716 177H737V187L727 193 716 187z" fill="url(#steel)" stroke="#333" stroke-width="1.500" /><path d="M719 189L736 177" stroke="#222" stroke-width="3" />
                  <path d="M716 136V157A11 4 0 0 0 737 157V136z" fill="url(#steel)" stroke="#333" stroke-width="1.500" /><path d="M717 157L736 140M724 160L737 149" stroke="#222" stroke-width="3" />
                  <ellipse cx="726.500" cy="136" rx="10.500" ry="3.500" fill="#eee" stroke="#333" stroke-width="1.500" />
                </template>
                <template v-else-if="g.id === 'multi'">
                  <path d="M869 154H890V171H869z" fill="#9ac4ee" stroke="#444a52" stroke-width="1.500" /><path d="M890 168L903 154H926L914 163 898 168z" fill="#ececec" stroke="#444a52" stroke-width="1.500" /><path d="M892 172L899 162 914 163 907 190 901 188z" fill="#9ac4ee" stroke="#444a52" stroke-width="1.500" /><path d="M914 163L926 154V171L907 190z" fill="#b4b7ba" stroke="#444a52" stroke-width="1.500" />
                  <path d="M889 149L902 155 891 176 882 178 877 172z" fill="url(#steel)" stroke="#222" stroke-width="1.500" /><path d="M885 158L898 160M881 166L893 169" stroke="#222" stroke-width="3" />
                  <path d="M888 136C894 132 912 143 912 149L908 156C902 156 888 149 886 145z" fill="#f3f3f3" stroke="#333" stroke-width="2" />
                </template>
                <template v-else-if="g.id === 'turn'">
                  <path d="M1046 143.500H1067L1078 156H1099V172H1078L1067 184H1046z" fill="url(#blue)" /><path d="M1046 143.500H1067L1078 156H1099V172H1078L1067 184H1046" fill="none" stroke="#444" stroke-width="2" />
                  <path d="M1045 140H1100M1071 144H1100M1077 148H1100M1081 152H1100" stroke="#0f2d5c" stroke-width="2.200" />
                </template>
                <template v-else-if="g.id === 'cut'">
                  <path d="M1200 149H1262" stroke="#444" stroke-width="2" /><rect x="1220" y="135" width="21" height="22" fill="url(#steel)" stroke="#333" stroke-width="2" /><path d="M1224 157H1237V163L1231 170 1224 163z" fill="#888" stroke="#333" stroke-width="1.500" />
                  <path d="M1231 170V190" stroke="#e63a12" stroke-width="2.500" /><path d="M1227 187v3M1235 187v3" stroke="#e63a12" stroke-width="2" /><rect x="1202" y="190" width="60" height="4" fill="#777b7e" /><rect x="1214" y="190" width="4" height="4" fill="#1263bb" />
                </template>
                <template v-else-if="g.id === 'act'">
                  <path d="M1329 180C1331 163 1340 154 1354 154C1374 154 1384 168 1385 180z" fill="url(#blue)" stroke="#555" stroke-width="1.500" /><path d="M1329 179C1340 185 1372 185 1385 179V186C1374 194 1340 194 1329 186z" fill="#ececec" stroke="#555" stroke-width="1.500" />
                  <path d="M1346 156C1358 160 1366 168 1368 183M1339 164C1352 166 1361 172 1363 183M1370 180L1382 178" fill="none" stroke="#0f2d5c" stroke-width="3.500" stroke-dasharray="3 4" />
                  <path d="M1363 152H1376V172A6.500 4 0 0 1 1363 172z" fill="url(#steel)" stroke="#555" stroke-width="1.500" /><path d="M1358 139A11.500 4.500 0 0 1 1380 139V151A11.500 5 0 0 1 1358 151z" fill="#eee" stroke="#444" stroke-width="1.500" /><ellipse cx="1369" cy="139" rx="11" ry="4" fill="#fff" />
                  <rect x="1423" y="136" width="42" height="56" fill="url(#gcode)" stroke="#555" stroke-width="2" />
                  <text class="rt" font-size="17" fill="#3d9df5"><tspan x="1434" y="153">G1</tspan><tspan x="1434" y="170">G2</tspan><tspan x="1434" y="187">G3</tspan></text>
                </template>
                <template v-else-if="g.id === 'insp'">
                  <path d="M1539 146V156M1593 146V156M1539 151H1593" stroke="#555" stroke-width="2" /><rect x="1539" y="168" width="54" height="9" fill="#edc233" stroke="#8a5a10" stroke-width="2" /><path d="M1543 169v3m4-3v3m4-3v3m4-3v4m4-4v3m4-3v3m4-3v4m4-4v3m4-3v3m4-3v3m4-3v3m4-3v4" stroke="#a37410" />
                </template>
                <template v-else-if="g.id === 'man'">
                  <path d="M1691 146H1750V188H1691z" fill="url(#greyUp)" stroke="#3b464c" stroke-width="2" /><path d="M1691 142H1715L1721 147 1715 152H1691z" fill="#b9dcec" stroke="#3b464c" stroke-width="2" />
                  <path d="M1717 165H1726V180L1721 184 1717 181z" fill="url(#steel)" stroke="#222" stroke-width="1.500" /><path d="M1717 173L1726 166M1717 181L1726 174" stroke="#222" stroke-width="2" /><rect x="1713.500" y="155.500" width="16" height="9" rx="3" fill="#fff" stroke="#333" stroke-width="1.500" />
                </template>
                <template v-else-if="g.id === 'add'">
                  <rect x="1850" y="138" width="44" height="40" fill="url(#grey)" stroke="#4a4d55" stroke-width="2" /><rect x="1850" y="138" width="44" height="8" fill="#868d9a" stroke="#4a4d55" stroke-width="1.500" /><path d="M1856 154l5 4-5 4M1866 157h8" fill="none" stroke="#444" stroke-width="2.200" />
                  <circle cx="1894" cy="178" r="10.500" fill="none" stroke="#4a6ea5" stroke-width="6" stroke-dasharray="4.400 3.850" /><circle cx="1894" cy="178" r="6.500" fill="#fff" stroke="#5f85bd" stroke-width="6" /><circle cx="1894" cy="178" r="6.500" fill="#fff" stroke="#9dbce6" stroke-width="4" />
                </template>
                <template v-else>
                  <rect x="1988" y="126" width="76" height="76" fill="#0696d7" /><rect x="1998" y="134.500" width="40" height="26" fill="none" stroke="#5ca80c" stroke-width="2.500" />
                  <path d="M2037 160L2055 177H2047L2052 188 2047 191 2042 179 2037 186z" fill="#e3e6ec" stroke="#2a3440" stroke-width="1.500" />
                </template>
              </svg>
              <div class="label" :style="{ transform: `translateX(${g.shift}px)` }"><span v-fit="g.text">{{ g.label }}</span><i class="tri" /></div>
            </div>
          </template>
        </div>

        <div class="panel">
          <svg width="49" height="20" viewBox="0 0 49 20"><path d="M9 10l9-5.500v11zM18 10l10-5.500v11z" fill="#333" /></svg>
          <span v-fit="100">BROWSER</span><svg class="knob" width="16" height="16" viewBox="0 0 16 16"><rect width="16" height="16" rx="6" fill="#333" /><path d="M2 8h12" stroke="#aaa" stroke-width="1.800" /></svg><i class="bars" />
        </div>

        <div class="tree">
          <div v-for="(r, n) in rows" :key="n" class="row" :style="{ marginLeft: r.x - 42 + 'px' }">
            <svg width="36" height="40" viewBox="0 0 36 40">
              <path v-if="r.arrow === 'open'" d="M2 26.500H14.500V14z" fill="#777" stroke="#000" stroke-width="1.800" />
              <path v-if="r.arrow === 'shut'" d="M3 12V28.500L13 20z" fill="#fff" stroke="#000" stroke-width="1.400" />
            </svg>
            <div class="chip" :class="r.kind" :style="{ width: r.chip + 'px' }">
              <svg :width="r.slot" height="40" :viewBox="`0 0 ${r.slot} 40`">
                <template v-if="r.icon === 'root'"><use href="#i-bulb" x="13" y="5" width="18" height="30" /><use href="#i-cubes" x="58" y="5" width="28" height="29" /></template>
                <template v-else-if="r.icon === 'units'"><path d="M10 4.500H25L32.500 12V31H10z" fill="url(#greyUp)" stroke="#444" stroke-width="1.500" /><path d="M25 4.500V12H32.500" fill="#fff" stroke="#444" stroke-width="1.500" /><rect x="7.500" y="28.500" width="28" height="5" fill="#edc233" stroke="#8a5a10" stroke-width="1.500" /></template>
                <template v-else-if="r.icon === 'folder'"><path d="M7.500 7H19L22 10H36.500V31.500H7.500z" fill="url(#grey)" stroke="#444a55" stroke-width="1.700" /><path d="M8 10.500H22" stroke="#444a55" /></template>
                <use v-else-if="r.icon === 'setup'" href="#i-setup" x="6" y="8.500" width="32" height="23" />
                <template v-else><path d="M22 7.500L37.500 32H6.500z" fill="#fdf000" stroke="#b8952a" stroke-width="2" stroke-linejoin="round" /><path d="M22 15v9M22 26.500v3" stroke="#222" stroke-width="2.800" /><use href="#i-adapt" x="57" y="5" width="30" height="29" /></template>
              </svg>
              <span v-fit="r.tw">{{ r.text }}</span>
              <svg v-if="r.kind === 'radio'" class="dot" width="28" height="28" viewBox="0 0 28 28"><circle cx="14" cy="14" r="12.500" fill="url(#grey)" stroke="#444" stroke-width="1.600" /></svg>
              <svg v-if="r.kind === 'hatched'" class="hatch" width="156" height="9" viewBox="0 0 156 9"><path v-for="k in 13" :key="k" :d="`M${(k - 1) * 12 + 1.5} 8L${(k - 1) * 12 + 8} 1`" stroke="#7288ad" stroke-width="4" /></svg>
            </div>
            <div v-if="r.kind === 'active'" class="after"><svg width="28" height="28" viewBox="0 0 28 28"><circle cx="14" cy="14" r="12.500" fill="#dfe2e8" stroke="#444" stroke-width="1.600" /><circle cx="14" cy="14" r="8" fill="none" stroke="#b8bdc8" stroke-width="5" /><circle cx="14" cy="14" r="5" fill="#333" /></svg></div>
          </div>
        </div>

        <div class="footer">
          <div class="panel low">
            <i class="pad" /><span v-fit="123">COMMENTS</span><svg class="knob" width="16" height="16" viewBox="0 0 16 16"><rect width="16" height="16" rx="6" fill="#333" /><path d="M2 8h12M8 2v12" stroke="#aaa" stroke-width="1.800" /></svg><i class="bars" />
          </div>
          <svg class="nav" width="568" height="48" viewBox="778 1546 568 48">
            <g fill="none" stroke="#4a4f58" stroke-width="1.400"><ellipse cx="800" cy="1569" rx="6" ry="14.500" /><ellipse cx="800" cy="1569" rx="14.500" ry="6.500" stroke-dasharray="60 9" /></g>
            <path d="M800 1566v6M797 1569h6" stroke="#0c6fd8" stroke-width="1.600" /><path d="M803 1557h4v4zM808 1562h4v4z" fill="#333" />
            <g fill="#333"><path d="M826 1564h18l-9 12zM1048 1564h18l-9 12zM1124 1564h18l-9 12zM1186 1564h18l-9 12zM1264 1564h18l-9 12zM1326 1564h18l-9 12z" /></g>
            <path d="M853 1565H879V1582H853z" fill="#f2f2f4" stroke="#444" stroke-width="1.800" /><rect x="857" y="1569" width="18" height="9" fill="#a5abb5" stroke="#555" stroke-width="1.500" /><path d="M854 1563L862 1557v4l10-3v5z" fill="#8f949c" stroke="#444" />
            <path d="M911 1583C909 1577 905 1574 903 1569C905 1566 908 1568 911 1572L908 1559C909 1557 911 1557 912 1559L915 1568 915 1556C916 1554 918 1554 919 1556L920 1567 923 1557C924 1555 926 1556 926 1558L925 1569 929 1562C931 1561 933 1562 932 1564L927 1577 926 1583z" fill="#fff" stroke="#444" stroke-width="1.500" />
            <circle cx="966" cy="1565" r="10.500" fill="url(#lens)" stroke="#555" stroke-width="2" /><path d="M973 1572L984 1582" stroke="#30353a" stroke-width="4.500" /><path d="M978 1557h7M981.500 1553.500v7M978 1563h7" stroke="#333" stroke-width="1.500" />
            <rect x="1007.500" y="1555.500" width="29" height="29" fill="none" stroke="#777" stroke-width="1.500" stroke-dasharray="6 3" /><circle cx="1018" cy="1565" r="10.500" fill="url(#lens)" stroke="#555" stroke-width="2" /><path d="M1025 1572L1036 1582" stroke="#30353a" stroke-width="4.500" />
            <rect x="1090" y="1555" width="28" height="22" fill="#eee" stroke="#444" stroke-width="2" /><rect x="1093.500" y="1558" width="21" height="16" fill="#92b6e6" stroke="#556a90" /><path d="M1100 1578h8v3h5v2.500h-18v-2.500h5z" fill="#999" stroke="#555" />
            <rect x="1152" y="1556" width="28" height="28" fill="url(#grey)" stroke="#444" stroke-width="1.700" /><path d="M1156 1556v28m4-28v28m4-28v28m4-28v28m4-28v28m4-28v28M1152 1560h28m-28 4h28m-28 4h28m-28 4h28m-28 4h28m-28 4h28" stroke="#555b66" stroke-width="1" />
            <path d="M1230 1564L1238 1555.500H1258.500V1575L1250 1584M1250 1564L1258.500 1555.500M1238 1555.500V1564M1250 1575H1258" fill="none" stroke="#333" stroke-width="1.500" /><rect x="1230" y="1564" width="20" height="20" fill="#a4c2ea" stroke="#444" stroke-width="1.500" /><circle cx="1237" cy="1575" r="5.500" fill="#c9ced6" stroke="#555" stroke-width="1.500" /><circle cx="1243" cy="1571" r="3" fill="#c9ced6" stroke="#555" />
            <rect x="1295" y="1557.500" width="23" height="24" fill="#a9cbee" stroke="#4d5c70" stroke-width="1.300" /><path d="M1291 1564H1318C1322 1564 1322 1570 1318 1570H1294C1290 1570 1290 1576 1294 1576H1321" fill="none" stroke="#14336a" stroke-width="2.500" />
          </svg>
          <b v-fit="77" class="current">Setup3</b>
        </div>
      </main>
    </section>
  </div>
</template>

<style>
html, body { margin: 0; overflow: hidden; background: #e2e2e2; }
</style>

<style scoped>
.desktop { position: relative; width: 2158px; height: 1614px; overflow: hidden; font-family: "Noto Sans", "Open Sans", sans-serif; color: #333; }
.desktop svg { flex: none; display: block; }
.back { position: absolute; left: 0; top: 0; }
.defs { position: absolute; }
.bt { font-family: "Noto Sans", sans-serif; font-weight: 600; }
.rt { font-family: "Noto Sans", sans-serif; }
.window { position: absolute; left: 6px; top: 5px; width: 2114px; height: 1597px; border-radius: 10px 10px 7px 7px; overflow: hidden; }
.window { box-shadow: 0 0 2px rgba(0, 0, 0, .6), 0 20px 46px rgba(0, 0, 0, .5); }
.titlebar { display: flex; align-items: center; height: 45px; box-sizing: border-box; padding-left: 16px; background: linear-gradient(#ebe8ec, #d0ced1); border-top: 1px solid #b8b8b8; border-bottom: 2px solid #adadad; }
.light { width: 22px; height: 22px; margin: 2px 16px 0 0; border: 1px solid #a9a9a9; border-radius: 50%; background: #cfcfcf; flex: none; }
.titlebar h1 { flex: 1; margin: 3px 0 0 -122px; padding-right: 18px; text-align: center; font: 400 25.5px/42px Inter, Roboto, sans-serif; color: #333; white-space: nowrap; }
.tabbar { display: flex; align-items: flex-start; height: 64px; background: #ccc; font-size: 23.5px; line-height: 34px; }
.tab { display: flex; align-items: center; width: 1298px; height: 56px; margin-top: 8px; background: #f1f1f1; border-radius: 8px 8px 0 0; }
.tabname { flex: 1; display: flex; align-items: center; padding-left: 526px; gap: 8px; white-space: nowrap; }
.tab .close { margin-right: 13px; }
.plus { display: flex; align-items: center; justify-content: center; width: 53px; height: 56px; padding-left: 3px; margin: 8px 24px 0 8px; background: #b9b9b9; border-radius: 8px 8px 0 0; }
.clock { margin-top: 16px; }
.user { margin: 15px 0 0 48px; white-space: nowrap; }
.help { margin: 16px 18px 0 auto; width: 32px; height: 32px; border-radius: 50%; background: #666; color: #d8d8d8; font-weight: 800; font-size: 27px; line-height: 31px; text-align: center; }
.viewport { position: relative; display: flex; flex-direction: column; height: 1488px; background: #fff; }
.canvas { position: absolute; left: 0; top: 0; }
.fine { fill: none; stroke: #55503a; stroke-opacity: .33; stroke-width: 4.200; }
.cube { font-family: "Noto Sans", sans-serif; font-weight: 700; }
.ribbon { position: relative; display: flex; width: 2082px; height: 120px; margin: 8px 0 0 8px; background: #f1f1f1; font-size: 22.500px; }
.workspace { display: flex; align-items: center; width: 249px; flex: none; }
.workspace b { font-weight: 600; white-space: nowrap; margin: 2px 9px 0 26px; }
.workspace .tri { margin-top: 4px; }
.grip { width: 6px; height: 46px; margin-left: 12px; border: solid #b9b9b9; border-width: 0 2px; flex: none; }
.tri { flex: none; width: 0; height: 0; border: 9px solid transparent; border-top: 12px solid #333; border-bottom: 0; }
.sep { width: 2px; height: 102px; margin-top: 9px; background: #c8c8c8; flex: none; }
.sep.tall { height: 110px; margin-top: 5px; }
.group { display: flex; flex-direction: column; align-items: center; flex: none; padding-top: 4px; box-sizing: border-box; }
.label { display: flex; align-items: center; gap: 5px; margin-top: 13px; line-height: 24px; white-space: nowrap; }
.panel { position: relative; display: flex; align-items: center; width: 599px; height: 50px; margin: 8px 0 0 8px; box-sizing: border-box; background: #f1f1f1; border: solid #c9c9c9; border-width: 1px 2px 2px 1px; font-size: 22.500px; color: #666; line-height: 30px; padding-bottom: 1px; }
.panel .knob { margin-left: auto; }
.panel .bars { width: 2px; height: 20px; margin: 0 1px 0 16px; border: solid #888; border-width: 0 1px 0 2px; flex: none; }
.panel .pad { width: 49px; }
.tree { position: relative; display: flex; flex-direction: column; gap: 8px; margin-top: 10px; font-size: 23px; line-height: 39px; }
.row { display: flex; height: 40px; }
.chip { position: relative; display: flex; background: #f1f1f1; white-space: nowrap; flex: none; }
.chip.active { background: #0696d7; color: #0c2d6b; font-weight: 700; }
.dot { margin: 6px 0 0 25px; }
.after { width: 50px; padding: 5px 0 0 8px; box-sizing: border-box; background: #f1f1f1; }
.hatch { position: absolute; left: -2px; top: 29px; }
.footer { position: relative; display: flex; align-items: flex-start; height: 58px; margin-top: auto; }
.footer .panel { margin-top: 0; border-top: 0; }
.nav { margin: 2px 0 0 165px; background: #f1f1f1; }
.current { margin: 11px 0 0 621px; font-size: 22.500px; line-height: 30px; color: #262626; }
</style>
